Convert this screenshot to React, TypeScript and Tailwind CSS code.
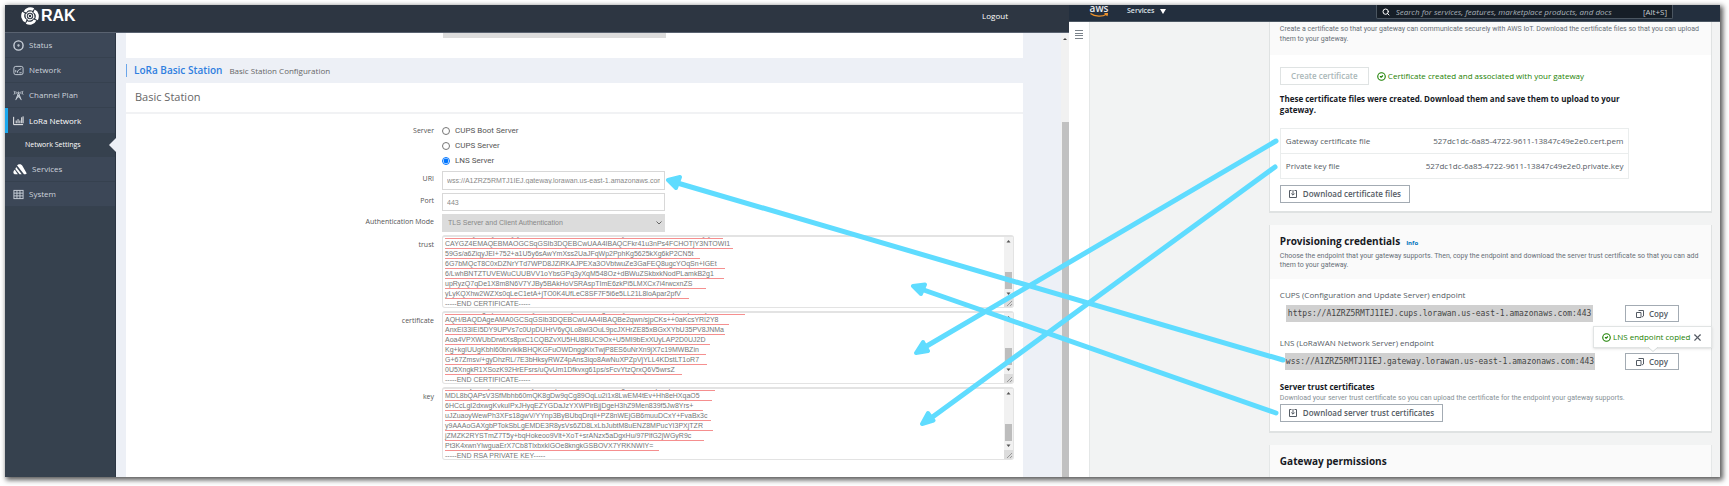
import { useEffect, useRef } from "react";
import type { ReactNode } from "react";
import { CircleCheck, CircleDot, Search, X } from "lucide-react";

type Line = { text: string; mark?: [number, number] };

const trustLines: Line[] = [
  { text: "ADBPMQswCQYDVQQGEwJVUzEPMA0GA1UEChMGQW1hem9uMRkwFwYDVQQDExBB", mark: [0, 278] },
  { text: "CAYGZ4EMAQEBMAOGCSqGSIb3DQEBCwUAA4IBAQCFkr41u3nPs4FCHOTjY3NTOWI1", mark: [0, 288] },
  { text: "59Gs/a6ZiqyJEI+752+a1U5y6sAwYmXss2UaJFqWp2PphKg5625kXg6kP2CN5t", mark: [0, 255] },
  { text: "6G7bMQcT8C0xDZNrYTd7WPD8JZiRKAJPEXa3OVbtwuZe3GaFEQ8ugcYOqSn+IGEt", mark: [0, 280] },
  { text: "6/LwhBNTZTUVEWuCUUBVV1oYbsGPq3yXqM548Oz+dBWuZSkbxkNodPLamkB2g1", mark: [0, 279] },
  { text: "upRyzQ7qDe1X8m8N6V7YJBy5BAkHoVSRAspTImE6zkPi5LMXCx7i4rwcxnZS", mark: [0, 261] },
  { text: "yLyKQXhw2WZXs0qLeC1etA+jTO0K4UfLeC8SF7F5i6e5LL21L8loApar2pfV", mark: [0, 244] },
  { text: "-----END CERTIFICATE-----" },
];

const certificateLines: Line[] = [
  { text: "MIIBAzANBgkqhkiG9w0BAQEFAAOCAQ8AMIIBCgKCAQEAu2hYk8sTnqRZ+pWfXyLd", mark: [0, 300] },
  { text: "AQH/BAQDAgeAMA0GCSqGSIb3DQEBCwUAA4IBAQBe2qwn/sjpCKs++0aKcsYRI2Y8", mark: [0, 284] },
  { text: "AnxEl33IEI5DY9UPVs7c0UpDUHrV6yQLo8wl3OuL9pcJXHrZE85xBGxXYbU35PV8JNMa", mark: [0, 280] },
  { text: "Aoa4VPXWUbDrwtXs8pxC1CQBZvXU5HU8BUC9Ox+U5MI9bExXUyLAP2D0UJ2D", mark: [0, 265] },
  { text: "Kg+kgIUUgKbhl60brviklkBHQKGFuOWDnggKixTwjP8ES6uNrXn9jX7c19MWBZin", mark: [0, 261] },
  { text: "G+67Zmsv/+gyDhzRL/7E3bHksyRWZ4pAns3iqo8AwNuXPZpVjYLL4KDstLT1oR7", mark: [0, 262] },
  { text: "0U5XngkR1XSozK92HrEFsrs/uQvUm1Dfkvxg61ps/sFcvYtzQrxQ6V5wrsZ", mark: [0, 237] },
  { text: "-----END CERTIFICATE-----" },
];

const keyLines: Line[] = [
  { text: "bXrmZTjPaVQ8hLsKe3DnXyW5tCqRvU7oGzBiMfJk9wTgYhNsAdEpOlqu+CH3a", mark: [0, 270] },
  { text: "MDL8bQAPsV3SfMbhb60mQK8gDw9qCg89OqLu2i1x8LwEM4tEv+Hh8eHXqaO5", mark: [0, 267] },
  { text: "6HCcLgI2dxwgKvkuIPxJHyqEZYGDaJzYXWPlrBjjDgeH3hZ9Men839f5Jw8Yrs+", mark: [0, 258] },
  { text: "uJZuaoyWewPh3XFs18gwV/YYnp3ByBUbqDrqll+PZ8nWEjGB6muuDCxY+FvaBx3c", mark: [0, 266] },
  { text: "y9AAAoGAXgbPTokSbLgEMDE3R8ysVs6ZD8LxLbJubtM8uENZ8MPucYI3PXjTZR", mark: [0, 268] },
  { text: "jZMZK2RYSTmZ7T5y+bqHokeoo9Vlt+XoT+srANzx5aDgxHu/97PlfG2jWGyR9c", mark: [0, 259] },
  { text: "Pt3K4xwnYlwguaErX7Cb8TlxbxklGOe8kngkGSBOVX7YRKNWIY=", mark: [0, 214] },
  { text: "-----END RSA PRIVATE KEY-----", mark: [30, 14] },
];

function RakMark() {
  return (
    <svg viewBox="0 0 18 18" className="size-[18px]" fill="none" stroke="#fff">
      <circle cx="9" cy="9" r="1.800" strokeWidth="1" />
      <path d="M9 5.200a3.800 3.800 0 0 1 3.800 3.800v2M12.800 9A3.800 3.800 0 0 1 9 12.800H7M9 12.800A3.800 3.800 0 0 1 5.200 9V7M5.200 9A3.800 3.800 0 0 1 9 5.200h2" strokeWidth="1.200" />
      <path d="M4 5C5.500 1.500 9.500 1 12.500 2.500M13 4c3.500 1.500 4 5.500 2.500 8.500M14 13c-1.500 3.500-5.500 4-8.500 2.500M5 14c-3.500-1.500-4-5.500-2.500-8.500" strokeWidth="3" />
    </svg>
  );
}

function NavIcon({ children }: { children: ReactNode }) {
  return (
    <svg viewBox="0 0 12 12" className="size-[11px] shrink-0" fill="none" stroke="currentColor" strokeWidth="1">
      {children}
    </svg>
  );
}

const nav: { label: string; icon: ReactNode; active?: boolean }[] = [
  { label: "Status", icon: <CircleDot className="size-[11px] shrink-0" fill="none" strokeWidth={3} /> },
  {
    label: "Network",
    icon: (
      <NavIcon>
        <rect x="1" y="1.500" width="10" height="9" rx="2" />
        <path d="M3 8V5.500M5 8.500V6.500l2-1.500 2-1M7 8.500h2.500" />
      </NavIcon>
    ),
  },
  {
    label: "Channel Plan",
    icon: (
      <NavIcon>
        <path d="M1 1c1 1 1 3 0 4M3 1.500c.7.8.7 2 0 3M11 1c-1 1-1 3 0 4M9 1.500c-.7.8-.7 2 0 3M6 3 3 11M6 3l3 8M4.500 7.500h3M5 5l3.500 5M7 5l-3.500 5" />
        <circle cx="6" cy="3" r=".8" />
      </NavIcon>
    ),
  },
  {
    label: "LoRa Network",
    active: true,
    icon: (
      <NavIcon>
        <path d="M.7 2v8.500H11M3.500 9V6M5.500 9V4.500M7.500 9V6M9.500 9V2.500M11 9V1.500" />
      </NavIcon>
    ),
  },
];

const lowerNav = [
  {
    label: "Services",
    icon: (
      <svg viewBox="0 0 14 12" className="h-3 w-3.5 shrink-0" fill="#fff">
        <path d="M4 2.500C5.500.5 8.500.7 9.500 3L13.500 10c.2.800-.3 1.200-1 1.200H11L4.500 3z" />
        <path d="M3.200 4 8.700 11.200H6.500L2.300 6z" />
        <path d="M1.800 6.800 4.800 11.200H1.600C0 10.800-.1 8 1.800 6.800z" />
      </svg>
    ),
  },
  {
    label: "System",
    icon: (
      <NavIcon>
        <rect x="1" y="1.500" width="10" height="9" />
        <path d="M1 4.500h10M1 7.500h10M4.300 1.500v9M7.600 1.500v9" />
      </NavIcon>
    ),
  },
];

function Sidebar() {
  return (
    <nav className="flex w-[111px] shrink-0 flex-col border-r border-[#2b3543] bg-[#36414e] text-[8px] text-[#ccd3dc]">
      {nav.map((item) => (
        <a
          key={item.label}
          href="#"
          className={
            item.active
              ? "flex h-[25px] items-center gap-[5px] border-l-[3px] border-[#1ca8ee] bg-[#3c4757] pl-[5px] text-white"
              : "flex h-[25px] items-center gap-[5px] border-b border-[#36414f] bg-[#3c4757] pl-2"
          }
        >
          {item.icon}
          {item.label}
        </a>
      ))}
      <a href="#" className="relative flex h-6 items-center pl-5 text-[7px] text-white">
        Network Settings
        <svg viewBox="0 0 7 14" className="absolute -right-px h-3.5 w-[7px]" fill="#edf0f6">
          <path d="M7 0v14L0 7z" />
        </svg>
      </a>
      {lowerNav.map((item) => (
        <a key={item.label} href="#" className="flex h-[25px] items-center gap-[5px] border-b border-[#36414f] bg-[#3c4757] pl-2">
          {item.icon}
          {item.label}
        </a>
      ))}
    </nav>
  );
}

function PemField({ id, lines }: { id: string; lines: Line[] }) {
  const ref = useRef<HTMLTextAreaElement>(null);
  useEffect(() => {
    if (ref.current) ref.current.scrollTop = ref.current.scrollHeight;
  }, []);
  return (
    <div className="flex h-[73px] overflow-hidden rounded-[3px] border border-t-2 border-[#e3e3e3] bg-white">
      <div className="relative min-w-0 flex-1 overflow-hidden">
        <div aria-hidden="true" className="absolute inset-x-0 -bottom-0.5 flex flex-col pl-0.5">
          {lines.map((line) => (
            <div key={line.text} className="flex h-2.5 flex-col justify-end">
              {line.mark && (
                <div className="h-px bg-[#f58f8f]" style={{ marginLeft: line.mark[0], width: line.mark[1] }} />
              )}
            </div>
          ))}
        </div>
        <textarea
          id={id}
          ref={ref}
          wrap="off"
          spellCheck={false}
          defaultValue={lines.map((line) => line.text).join("\n")}
          className="relative block h-[72px] w-full resize-none overflow-hidden bg-transparent p-0 pl-0.5 font-['Liberation_Sans',sans-serif] text-[7px] leading-[10px] text-[#777] outline-none"
        />
      </div>
      <div className="flex w-[9px] flex-col items-center bg-[#f1f1f1]">
        <svg viewBox="0 0 9 9" className="size-[9px]" fill="#555">
          <path d="M2.500 5.500h4l-2-2.500z" />
        </svg>
        <div className="flex-1" />
        <div className="h-[17px] w-[7px] bg-[#bdbdbd]" />
        <svg viewBox="0 0 9 9" className="size-[9px]" fill="#555">
          <path d="M2.500 3.500h4l-2 2.500z" />
        </svg>
        <svg viewBox="0 0 9 9" className="size-[9px] bg-[#dcdcdc]" stroke="#999">
          <path d="M3 8l5-5M6 8l2-2" />
        </svg>
      </div>
    </div>
  );
}

function RakWindow() {
  return (
    <section className="flex min-h-0 min-w-0 flex-col font-['Open_Sans','Noto_Sans',sans-serif]">
      <header className="flex h-7 shrink-0 items-center justify-between border-b border-[#596270] bg-[#2d3642] pr-[61px] pl-4 text-white">
        <div className="flex items-center gap-0.5 pb-1.5">
          <RakMark />
          <span className="font-['Liberation_Sans',sans-serif] text-[16px] leading-4 font-bold">RAK</span>
        </div>
        <a href="#" className="pb-1.5 text-[8px]">
          Logout
        </a>
      </header>
      <div className="flex min-h-0 flex-1">
        <Sidebar />
        <main className="min-w-0 flex-1 overflow-hidden bg-[#edf0f6] pr-[38px] pl-2.5">
          <div className="grid h-[25px] grid-cols-[308fr_580fr] bg-white pr-[9px]">
            <div />
            <div className="pl-[9px]">
              <div className="h-[5px] w-[39%] bg-[#dcdcdc]" />
            </div>
          </div>
          <div className="flex h-[25px] items-center">
            <div className="flex h-[13px] items-center gap-[7px] border-l border-[#6ba6ea] pl-[7px]">
              <h1 className="text-[10px] font-semibold text-[#2f7fe0]">LoRa Basic Station</h1>
              <span className="text-[8px] text-[#666]">Basic Station Configuration</span>
            </div>
          </div>
          <div className="bg-white">
            <h2 className="flex h-[31px] items-center border-b-2 border-[#f1f2f4] pl-[9px] text-[11px] text-[#666]">
              Basic Station
            </h2>
            <form className="grid grid-cols-[308fr_572fr] gap-x-2 gap-y-[3px] pt-[9px] pr-[9px] pb-[17px] text-[7px] text-[#555]">
              <span className="pt-0.5 text-right leading-3">Server</span>
              <div className="font-['Roboto',sans-serif] text-[8px]">
                {["CUPS Boot Server", "CUPS Server", "LNS Server"].map((label) => (
                  <label key={label} className="flex h-[15px] items-center gap-[5px]">
                    <input type="radio" name="server" defaultChecked={label === "LNS Server"} className="size-2" />
                    {label}
                  </label>
                ))}
              </div>
              <label htmlFor="uri" className="pt-0.5 text-right leading-3">
                URI
              </label>
              <input
                id="uri"
                defaultValue="wss://A1ZRZ5RMTJ1IEJ.gateway.lorawan.us-east-1.amazonaws.com"
                className="h-[19px] w-[39%] border border-[#d8d8d8] px-1 font-['Liberation_Sans',sans-serif] text-[7px] text-[#888] outline-none"
              />
              <label htmlFor="port" className="pt-0.5 text-right leading-3">
                Port
              </label>
              <input
                id="port"
                defaultValue="443"
                className="h-[18px] w-[39%] border border-[#d8d8d8] px-1 font-['Liberation_Sans',sans-serif] text-[7px] text-[#888] outline-none"
              />
              <label htmlFor="auth" className="pt-0.5 text-right leading-3">
                Authentication Mode
              </label>
              <div className="relative flex h-[18px] w-[39%] items-center">
                <select
                  id="auth"
                  className="h-full w-full appearance-none bg-[#dcdcdc] pl-1.5 font-['Liberation_Sans',sans-serif] text-[7px] text-[#888]"
                >
                  <option>TLS Server and Client Authentication</option>
                </select>
                <svg viewBox="0 0 6 4" className="absolute right-[3px] h-1 w-1.5" fill="none" stroke="#666">
                  <path d="M.5.500 3 3 5.500.500" />
                </svg>
              </div>
              <label htmlFor="trust" className="pt-1 text-right leading-3">
                trust
              </label>
              <PemField id="trust" lines={trustLines} />
              <label htmlFor="certificate" className="pt-1 text-right leading-3">
                certificate
              </label>
              <PemField id="certificate" lines={certificateLines} />
              <label htmlFor="key" className="pt-1 text-right leading-3">
                key
              </label>
              <PemField id="key" lines={keyLines} />
            </form>
          </div>
        </main>
        <div className="flex w-2 shrink-0 flex-col items-center bg-[#f1f1f1]">
          <svg viewBox="0 0 8 8" className="mt-0.5 size-2 shrink-0" fill="#444">
            <path d="M2 5h4L4 3z" />
          </svg>
          <div className="mt-[79px] w-[7px] flex-1 bg-[#c1c1c1]" />
        </div>
      </div>
    </section>
  );
}

function DownloadIcon() {
  return (
    <svg viewBox="0 0 8 8" className="size-2 shrink-0" fill="none" stroke="currentColor">
      <path d="M2.500.500h-2v7h7v-7h-2M4 0v5M2.300 3.500 4 5.200l1.700-1.700" />
    </svg>
  );
}

function CopyButton() {
  return (
    <button className="flex h-[17px] w-[54px] items-center justify-center gap-[5px] border border-[#a3abb3] bg-white text-[8px] font-semibold text-[#545b64]">
      <svg viewBox="0 0 8 8" className="size-2" fill="none" stroke="currentColor">
        <path d="M2.500.500h5v5.500l-1.500 1M.5 2.500h4.500v5H.5z" />
      </svg>
      Copy
    </button>
  );
}

function AwsWindow() {
  return (
    <section className="flex min-h-0 min-w-0 flex-col font-['Open_Sans','Noto_Sans',sans-serif]">
      <header className="flex h-[17px] shrink-0 items-start border-b border-[#4c5763] bg-[#232f3e] pr-[47px] pl-[21px] text-white">
        <div className="flex h-3 w-[18px] flex-col items-center">
          <span className="text-[10px] leading-[7px] font-semibold text-[#e8eaed]">aws</span>
          <svg viewBox="0 0 18 4" className="mt-px h-1 w-[18px] shrink-0" fill="none" stroke="#f0932b" strokeWidth="1.300">
            <path d="M.5.500C5 4 12.500 4 16.500 1.200M14.500.600h3l-.7 2.400" />
          </svg>
        </div>
        <button className="ml-[19px] flex h-3 items-center gap-[5px] text-[7px] font-semibold text-[#dfe3e8]">
          Services
          <svg viewBox="0 0 6 5" className="h-[5px] w-1.5" fill="#fff">
            <path d="M0 0h6L3 5z" />
          </svg>
        </button>
        <label className="ml-auto flex h-3.5 w-[51%] items-center gap-1.5 rounded-b-[2px] border border-t-0 border-[#4b5661] bg-[#161e27] px-[5px] text-[8px]">
          <Search className="size-2 shrink-0" strokeWidth={3} aria-label="Search" />
          <input
            placeholder="Search for services, features, marketplace products, and docs"
            className="h-3 min-w-0 flex-1 bg-transparent italic outline-none placeholder:text-[#aab2ba]"
          />
          <span className="text-[8px] text-[#c5cbd1]">[Alt+S]</span>
        </label>
      </header>
      <div className="flex min-h-0 flex-1 bg-[#f2f3f3]">
        <div className="flex w-[21px] shrink-0 justify-center border-r border-[#e4e7e7] bg-white pt-2">
          <button aria-label="Open navigation" className="h-[9px] w-2">
            <svg viewBox="0 0 8 9" className="h-[9px] w-2" stroke="#7a828a">
              <path d="M0 .500h8M0 3.500h8M0 5.500h8M0 8.500h8" />
            </svg>
          </button>
        </div>
        <main className="ml-auto flex w-[69.3%] flex-col gap-3 overflow-hidden pr-2 text-[7px] text-[#545b64]">
          <article className="shrink-0 border-x border-b-2 border-[#dfe2e2] bg-white">
            <p className="h-[33px] bg-[#fafafa] pt-0.5 pr-1 pl-2.5 font-['Roboto',sans-serif] leading-[10px] text-[#687078]">
              Create a certificate so that your gateway can communicate securely with AWS IoT. Download the certificate files so that you can upload
              <br />
              them to your gateway.
            </p>
            <div className="px-2.5 pt-3 pb-2">
              <div className="flex items-center gap-2">
                <button disabled className="h-[18px] w-[89px] border border-[#dfe3e3] text-[8px] font-semibold text-[#aab7b8]">
                  Create certificate
                </button>
                <p className="flex items-center gap-0.5 text-[8px] text-[#1d8102]">
                  <CircleCheck className="size-[9px]" strokeWidth={3} />
                  Certificate created and associated with your gateway
                </p>
              </div>
              <p className="mt-2 pr-20 text-[8px] leading-[11px] font-bold text-[#16191f]">
                These certificate files were created. Download them and save them to upload to your gateway.
              </p>
              <table className="mt-[13px] w-[83%] border border-[#eaeded] text-[8px]">
                <tbody>
                  <tr className="h-[25px] border-b border-[#eaeded]">
                    <td className="pl-[5px]">Gateway certificate file</td>
                    <td className="pr-[5px] text-right">527dc1dc-6a85-4722-9611-13847c49e2e0.cert.pem</td>
                  </tr>
                  <tr className="h-[25px]">
                    <td className="pl-[5px]">Private key file</td>
                    <td className="pr-[5px] text-right">527dc1dc-6a85-4722-9611-13847c49e2e0.private.key</td>
                  </tr>
                </tbody>
              </table>
              <button className="mt-1.5 flex h-[18px] items-center gap-1.5 border border-[#a3abb3] px-2 text-[8px] font-semibold">
                <DownloadIcon />
                Download certificate files
              </button>
            </div>
          </article>

          <article className="shrink-0 border-x border-b-2 border-[#dfe2e2] bg-white">
            <div className="h-[54px] bg-[#fafafa] pt-[9px] pr-1 pl-2.5">
              <h2 className="flex items-baseline gap-1.5 text-[10px] leading-[14px] font-bold text-[#16191f]">
                Provisioning credentials
                <a href="#" className="text-[6px] text-[#0073bb]">
                  Info
                </a>
              </h2>
              <p className="mt-0.5 font-['Roboto',sans-serif] leading-[9px] text-[#687078]">
                Choose the endpoint that your gateway supports. Then, copy the endpoint and download the server trust certificate so that you can add
                <br />
                them to your gateway.
              </p>
            </div>
            <div className="px-2.5 pt-2.5 pb-[9px]">
              <h3 className="text-[8px] leading-3">CUPS (Configuration and Update Server) endpoint</h3>
              <div className="mt-1 flex items-center justify-between pr-[22px] pl-1.5">
                <code className="flex h-[17px] items-center bg-[#d0d0d0] px-0.5 font-['DejaVu_Sans_Mono',monospace] text-[8px] text-[#444]">
                  https://A1ZRZ5RMTJ1IEJ.cups.lorawan.us-east-1.amazonaws.com:443
                </code>
                <CopyButton />
              </div>
              <h3 className="mt-[15px] text-[8px] leading-3">LNS (LoRaWAN Network Server) endpoint</h3>
              <div className="mt-1 flex items-center justify-between pr-[22px] pl-[5px]">
                <code className="flex h-[17px] items-center bg-[#d0d0d0] px-px font-['DejaVu_Sans_Mono',monospace] text-[8px] text-[#444]">
                  wss://A1ZRZ5RMTJ1IEJ.gateway.lorawan.us-east-1.amazonaws.com:443
                </code>
                <div className="relative">
                  <CopyButton />
                  <div
                    role="status"
                    className="absolute -right-[33px] bottom-[22px] flex h-[22px] w-[119px] items-center border border-[#e1e4e4] bg-white pl-2 text-[8px] whitespace-nowrap text-[#1d8102] shadow-sm"
                  >
                    <CircleCheck className="size-[9px] shrink-0" strokeWidth={3} />
                    <span className="ml-0.5">LNS endpoint copied</span>
                    <button aria-label="Dismiss" className="mr-2 ml-auto text-[#545b64]">
                      <X className="size-[11px]" strokeWidth={2.5} />
                    </button>
                    <svg viewBox="0 0 10 5" className="absolute top-full left-[54px] h-[5px] w-2.5" fill="#fff" stroke="#d5dbdb">
                      <path d="M0 0l5 4.500L10 0" />
                    </svg>
                  </div>
                </div>
              </div>
              <h3 className="mt-[11px] text-[8px] leading-3 font-bold text-[#16191f]">Server trust certificates</h3>
              <p className="font-['Roboto',sans-serif] leading-[10px] text-[#879196]">
                Download your server trust certificate so you can upload the certificate for the endpoint your gateway supports.
              </p>
              <button className="mt-px flex h-[18px] items-center gap-1.5 border border-[#a3abb3] px-2 text-[8px] font-semibold">
                <DownloadIcon />
                Download server trust certificates
              </button>
            </div>
          </article>

          <article className="flex-1 border-x border-[#e4e7e7] bg-[#fafafa] px-2.5 pt-[9px]">
            <h2 className="text-[10px] leading-[14px] font-bold text-[#16191f]">Gateway permissions</h2>
          </article>
        </main>
      </div>
    </section>
  );
}

function Arrows() {
  return (
    <svg
      viewBox="0 0 1729 486"
      preserveAspectRatio="none"
      className="pointer-events-none absolute inset-0 h-full w-full"
      fill="#5fdcff"
      stroke="#5fdcff"
      strokeLinecap="round"
      strokeLinejoin="round"
    >
      <path d="M1283 360 674 182M1276 413 918 288M1276 141 920 350M1275 167 927 421" strokeWidth="5" />
      <path d="M668 180l12-3-4 11zM913 286l12-1.500-4 9.500zM916 353l7-11 5 9zM922 424l6-11 5.500 7.500z" strokeWidth="4" />
    </svg>
  );
}

export default function App() {
  return (
    <div className="relative h-screen bg-white pt-[5px] pr-[9px] pb-[9px] pl-[5px]">
      <div className="grid h-full grid-cols-[minmax(0,1064fr)_minmax(0,651fr)] grid-rows-[minmax(0,1fr)] overflow-hidden shadow-[2px_2px_5px_1px_rgba(0,0,0,0.65)]">
        <RakWindow />
        <AwsWindow />
      </div>
      <Arrows />
    </div>
  );
}
